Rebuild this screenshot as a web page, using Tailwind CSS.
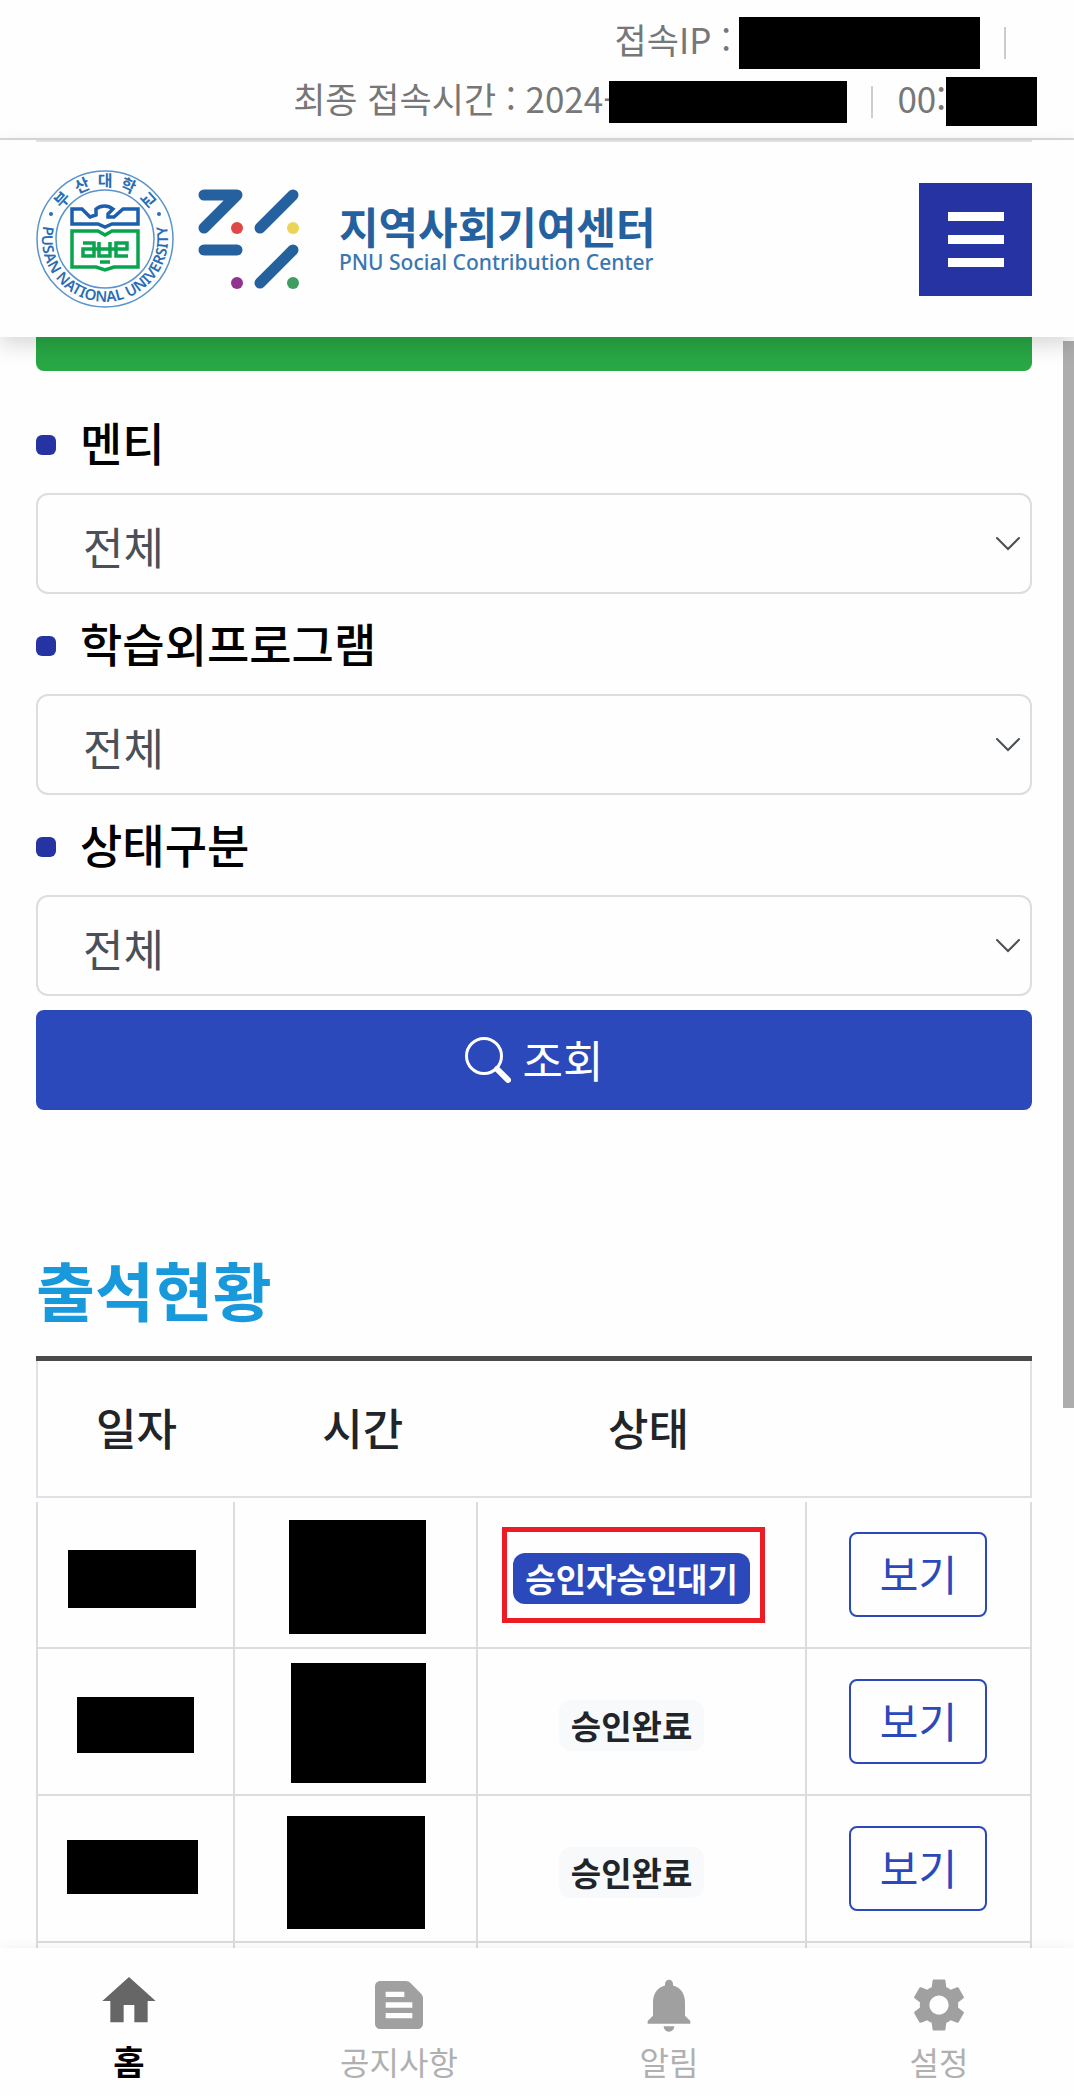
<!DOCTYPE html>
<html lang="ko">
<head>
<meta charset="utf-8">
<meta name="viewport" content="width=device-width, initial-scale=1">
<title>PNU 지역사회기여센터</title>
<script src="https://cdn.jsdelivr.net/npm/@tailwindcss/browser@4"></script>
</head>
<body class="flex h-screen flex-col overflow-hidden bg-[#fefefe] font-['Noto_Sans_CJK_KR',sans-serif] text-[#212529]">

<div class="flex flex-col items-end border-b-2 border-[#d9d9d9] pt-[13px] pb-[7px] text-[35px] leading-[52px] text-[#777]">
  <div class="flex items-center pr-[68px]">
    <span class="pb-[7px]">접속IP :</span>
    <span class="ml-2 h-[52px] w-[241px] bg-black"></span>
    <span class="ml-6 h-8 w-0.5 bg-[#ccc]"></span>
  </div>
  <div class="flex items-center pr-[37px]">
    <span class="pb-[7px]">최종 접속시간 : 2024-</span>
    <span class="-ml-1.5 h-[42px] w-[238px] bg-black"></span>
    <span class="ml-6 h-8 w-0.5 bg-[#ccc]"></span>
    <span class="ml-6 pb-[7px]">00:</span>
    <span class="h-[49px] w-[91px] bg-black"></span>
  </div>
</div>

<header class="relative z-10 bg-[#fefefe] pr-[42px] pl-9 shadow-[0_8px_20px_rgba(0,0,0,0.15)]">
  <div class="flex items-center justify-between border-t-2 border-[#e0e0e0] pt-7 pb-[29px]">
    <a href="#" class="flex items-center" aria-label="부산대학교 지역사회기여센터">
      <svg class="h-[138px] w-[138px]" viewBox="0 0 138 138" fill="none" aria-hidden="true">
        <defs>
          <path id="arcTop" d="M16.500 69A52.500 52.500 0 0 1 121.500 69"/>
          <path id="arcBottom" d="M8 53A63 63 0 1 0 130 53"/>
        </defs>
        <circle cx="69" cy="69" r="68" stroke="#5b93cb" stroke-width="1.500"/>
        <circle cx="69" cy="69" r="49" stroke="#5b93cb" stroke-width="1.500"/>
        <g fill="#2a6db5" font-size="16" font-weight="700" font-family="Noto Sans CJK KR" text-anchor="middle">
          <text><textPath href="#arcTop" startOffset="39">부</textPath></text>
          <text><textPath href="#arcTop" startOffset="61">산</textPath></text>
          <text><textPath href="#arcTop" startOffset="82.500">대</textPath></text>
          <text><textPath href="#arcTop" startOffset="104">학</textPath></text>
          <text><textPath href="#arcTop" startOffset="126">교</textPath></text>
        </g>
        <circle cx="15" cy="44" r="2" fill="#2a6db5"/>
        <circle cx="123" cy="44" r="2" fill="#2a6db5"/>
        <text fill="#2a6db5" font-size="15" font-weight="600" font-family="Noto Sans"><textPath href="#arcBottom" startOffset="50%" text-anchor="middle">PUSAN NATIONAL UNIVERSITY</textPath></text>
        <path d="M36 54V39H46L54 47L60 45V39C65 35 72 35 77 39L72 44V47H78L87 39H102V54H76L69 57L62 54Z" stroke="#1c5fae" stroke-width="3.500"/>
        <path d="M36 61H62L69 65L76 61H102V97H78L69 100L60 97H36Z" stroke="#0aa44e" stroke-width="3.500"/>
        <path d="M47 73H58V86H47V79H58M58 79H63M63 72V86H74V72M63 79H80M80 79V73H91V79H80V86H92M64 92H74" stroke="#0aa44e" stroke-width="3.500"/>
      </svg>
      <svg class="ml-6 h-[100px] w-[101px]" viewBox="198 188 101 100" fill="none" aria-hidden="true">
        <g stroke="#25609f" stroke-width="11" stroke-linecap="round" stroke-linejoin="round">
          <path d="M204 194H237L204 227M293 194L260 227M204 249H237M293 249L260 282"/>
        </g>
        <circle cx="237" cy="227" r="6" fill="#e04848"/>
        <circle cx="293" cy="227" r="6" fill="#ecd35a"/>
        <circle cx="237" cy="282" r="6" fill="#8f3590"/>
        <circle cx="293" cy="282" r="6" fill="#3f9c62"/>
      </svg>
      <span class="ml-10 flex flex-col">
        <span class="text-[43px] leading-[46px] font-bold text-[#25609f]">지역사회기여센터</span>
        <span class="font-['Noto_Sans'] text-[21px] leading-7 font-medium text-[#3a76b0]">PNU Social Contribution Center</span>
      </span>
    </a>
    <button type="button" aria-label="메뉴" class="flex h-[113px] w-[113px] flex-col items-center justify-center gap-3.5 bg-[#2533a3]">
      <span class="h-[9px] w-14 bg-white"></span>
      <span class="h-[9px] w-14 bg-white"></span>
      <span class="h-[9px] w-14 bg-white"></span>
    </button>
  </div>
</header>

<main class="min-h-0 flex-1 overflow-hidden pr-[42px] pl-9">
  <div class="h-[34px] rounded-b-lg bg-[#28a745]"></div>

  <form class="pt-[22px]">
    <label for="mentee" class="flex h-[100px] items-center gap-6 text-[46px] leading-[68px] font-medium text-black"><span class="mt-1 h-5 w-5 rounded-md bg-[#2533a3]"></span><span class="pb-1">멘티</span></label>
    <div class="relative">
      <select id="mentee" class="h-[101px] w-full appearance-none rounded-xl border-2 border-[#ddd] bg-transparent px-[45px] pt-1 text-[44px] text-[#495057]"><option>전체</option></select>
      <svg class="pointer-events-none absolute top-11 right-3 h-[14px] w-6" viewBox="0 0 24 14" fill="none" stroke="#495057" stroke-width="2" stroke-linecap="round"><path d="M1 1L12 12L23 1"/></svg>
    </div>
    <label for="program" class="flex h-[100px] items-center gap-6 text-[46px] leading-[68px] font-medium text-black"><span class="mt-1 h-5 w-5 rounded-md bg-[#2533a3]"></span><span class="pb-1">학습외프로그램</span></label>
    <div class="relative">
      <select id="program" class="h-[101px] w-full appearance-none rounded-xl border-2 border-[#ddd] bg-transparent px-[45px] pt-1 text-[44px] text-[#495057]"><option>전체</option></select>
      <svg class="pointer-events-none absolute top-11 right-3 h-[14px] w-6" viewBox="0 0 24 14" fill="none" stroke="#495057" stroke-width="2" stroke-linecap="round"><path d="M1 1L12 12L23 1"/></svg>
    </div>
    <label for="status" class="flex h-[100px] items-center gap-6 text-[46px] leading-[68px] font-medium text-black"><span class="mt-1 h-5 w-5 rounded-md bg-[#2533a3]"></span><span class="pb-1">상태구분</span></label>
    <div class="relative">
      <select id="status" class="h-[101px] w-full appearance-none rounded-xl border-2 border-[#ddd] bg-transparent px-[45px] pt-1 text-[44px] text-[#495057]"><option>전체</option></select>
      <svg class="pointer-events-none absolute top-11 right-3 h-[14px] w-6" viewBox="0 0 24 14" fill="none" stroke="#495057" stroke-width="2" stroke-linecap="round"><path d="M1 1L12 12L23 1"/></svg>
    </div>
    <button type="button" class="mt-3.5 flex h-[100px] w-full items-center justify-center gap-3 rounded-lg bg-[#2b49ba] text-[44px] text-white">
      <svg class="h-[46px] w-[46px]" viewBox="0 0 46 46" fill="none" stroke="currentColor" stroke-linecap="round" aria-hidden="true"><circle cx="19" cy="19" r="17.500" stroke-width="3"/><path d="M32 32L43 43" stroke-width="6"/></svg>
      <span class="pb-0.5">조회</span>
    </button>
  </form>

  <h2 class="mt-[132px] text-[64px] leading-[92px] font-bold text-[#1899db]">출석현황</h2>

  <table class="mt-[22px] w-full table-fixed border-separate border-spacing-0 border-t-5 border-[#4a4a4a] text-center">
    <colgroup><col class="w-[20%]"><col class="w-[24.4%]"><col class="w-[33%]"><col class="w-[22.6%]"></colgroup>
    <thead class="text-[44px]">
      <tr class="h-[137px]">
        <th scope="col" class="border-b-2 border-l-2 border-[#dee2e6] pb-1 font-medium">일자</th>
        <th scope="col" class="border-b-2 border-[#dee2e6] pb-1 pl-3 font-medium">시간</th>
        <th scope="col" class="border-b-2 border-[#dee2e6] pb-1 pl-3 font-medium">상태</th>
        <th scope="col" class="border-r-2 border-b-2 border-[#dee2e6]" aria-label="보기"></th>
      </tr>
    </thead>
    <tbody>
      <tr aria-hidden="true"><td colspan="4" class="h-1 p-0"></td></tr>
      <tr class="h-[147px]">
        <td class="relative border-x-2 border-b-2 border-[#dcdcdc]"><span class="absolute top-12 left-[30px] h-[58px] w-32 bg-black"></span></td>
        <td class="relative border-r-2 border-b-2 border-[#dcdcdc]"><span class="absolute top-[18px] left-[54px] h-[114px] w-[137px] bg-black"></span></td>
        <td class="relative border-r-2 border-b-2 border-[#dcdcdc] pt-2 pr-5"><span class="inline-block rounded-xl bg-[#2b49ba] px-3 text-[33px] leading-[51px] font-bold text-white">승인자승인대기</span><span class="absolute top-[25px] left-6 h-24 w-[263px] border-5 border-[#ed1c24]"></span></td>
        <td class="border-r-2 border-b-2 border-[#dcdcdc]"><button type="button" class="h-[85px] w-[138px] rounded-lg border-2 border-[#2b49ba] pb-1 text-[42px] leading-[76px] text-[#2b49ba]">보기</button></td>
      </tr>
      <tr class="h-[147px]">
        <td class="relative border-x-2 border-b-2 border-[#dcdcdc]"><span class="absolute top-12 left-[39px] h-14 w-[117px] bg-black"></span></td>
        <td class="relative border-r-2 border-b-2 border-[#dcdcdc]"><span class="absolute top-3.5 left-14 h-[120px] w-[135px] bg-black"></span></td>
        <td class="border-r-2 border-b-2 border-[#dcdcdc] pt-2 pr-5"><span class="inline-block rounded-xl bg-[#f8f9fa] px-3 text-[33px] leading-[51px] font-bold">승인완료</span></td>
        <td class="border-r-2 border-b-2 border-[#dcdcdc]"><button type="button" class="h-[85px] w-[138px] rounded-lg border-2 border-[#2b49ba] pb-1 text-[42px] leading-[76px] text-[#2b49ba]">보기</button></td>
      </tr>
      <tr class="h-[147px]">
        <td class="relative border-x-2 border-b-2 border-[#dcdcdc]"><span class="absolute top-11 left-[29px] h-[54px] w-[131px] bg-black"></span></td>
        <td class="relative border-r-2 border-b-2 border-[#dcdcdc]"><span class="absolute top-5 left-[52px] h-[113px] w-[138px] bg-black"></span></td>
        <td class="border-r-2 border-b-2 border-[#dcdcdc] pt-2 pr-5"><span class="inline-block rounded-xl bg-[#f8f9fa] px-3 text-[33px] leading-[51px] font-bold">승인완료</span></td>
        <td class="border-r-2 border-b-2 border-[#dcdcdc]"><button type="button" class="h-[85px] w-[138px] rounded-lg border-2 border-[#2b49ba] pb-1 text-[42px] leading-[76px] text-[#2b49ba]">보기</button></td>
      </tr>
      <tr class="h-[147px]">
        <td class="border-x-2 border-b-2 border-[#dcdcdc]"></td>
        <td class="border-r-2 border-b-2 border-[#dcdcdc]"></td>
        <td class="border-r-2 border-b-2 border-[#dcdcdc]"></td>
        <td class="border-r-2 border-b-2 border-[#dcdcdc]"></td>
      </tr>
    </tbody>
  </table>
</main>

<div class="absolute top-[341px] right-0 h-[1067px] w-[11px] bg-[#adadad]" aria-hidden="true"></div>

<nav class="relative z-10 h-[148px] shrink-0 bg-[#fefefe] text-[32px] leading-[48px] text-[#b0b0b0] shadow-[0_0_14px_rgba(0,0,0,0.06)]">
  <div class="-ml-1.5 grid grid-cols-4">
    <a href="#" class="flex flex-col items-center pt-[25px] text-[34px] font-bold text-black">
      <svg class="h-16 w-16" viewBox="0 0 24 24" fill="#666" aria-hidden="true"><path d="M10 20v-6.500h4V20h5v-8h3L12 3 2 12h3v8z" transform="translate(0 -1.500)"/></svg>
      <span>홈</span>
    </a>
    <a href="#" class="flex flex-col items-center pt-[25px]">
      <svg class="h-16 w-16" viewBox="0 0 24 24" fill="#a0a0a0" aria-hidden="true"><path fill-rule="evenodd" d="M5 3H14.500C15.200 3 15.800 3.300 16.200 3.700L20.300 7.800C20.700 8.200 21 8.800 21 9.500V19C21 20.100 20.100 21 19 21H5C3.900 21 3 20.100 3 19V5C3 3.900 3.900 3 5 3ZM7 7V9H14V7ZM7 11V13H17V11ZM7 15V17H17V15Z"/></svg>
      <span>공지사항</span>
    </a>
    <a href="#" class="flex flex-col items-center pt-[25px]">
      <svg class="h-16 w-16" viewBox="0 0 24 24" fill="#a0a0a0" aria-hidden="true"><path d="M12 22c1.100 0 2-.9 2-2h-4c0 1.100.9 2 2 2zm6-6v-5c0-3.100-1.600-5.600-4.500-6.300V4c0-.8-.7-1.500-1.500-1.500s-1.500.7-1.500 1.500v.7C7.600 5.400 6 7.900 6 11v5l-2 2v1h16v-1l-2-2z"/></svg>
      <span>알림</span>
    </a>
    <a href="#" class="flex flex-col items-center pt-[25px]">
      <svg class="h-16 w-16" viewBox="0 0 24 24" fill="#a0a0a0" aria-hidden="true"><path d="M19.140 12.940c.04-.3.060-.61.060-.94 0-.32-.02-.64-.07-.94l2.030-1.580c.18-.14.230-.41.120-.61l-1.920-3.320c-.12-.22-.37-.29-.59-.22l-2.390.96c-.5-.38-1.030-.7-1.620-.94l-.36-2.540c-.04-.24-.24-.41-.48-.41h-3.840c-.24 0-.43.170-.47.410l-.36 2.540c-.59.240-1.130.570-1.620.940l-2.390-.96c-.22-.08-.47 0-.59.220L2.740 8.870c-.12.210-.08.470.120.610l2.030 1.580c-.05.3-.09.630-.09.940s.02.640.07.940l-2.030 1.580c-.18.140-.23.410-.12.610l1.920 3.320c.12.220.37.290.59.220l2.390-.96c.5.380 1.030.7 1.620.940l.36 2.540c.05.240.24.410.48.410h3.840c.24 0 .44-.17.470-.41l.36-2.540c.59-.24 1.130-.56 1.620-.94l2.390.96c.22.080.47 0 .59-.22l1.920-3.320c.12-.22.070-.47-.12-.61l-2.010-1.580zM12 15.600c-1.980 0-3.600-1.620-3.600-3.600s1.620-3.600 3.600-3.600 3.600 1.620 3.600 3.600-1.620 3.600-3.600 3.600z"/></svg>
      <span>설정</span>
    </a>
  </div>
</nav>
</body>
</html>
